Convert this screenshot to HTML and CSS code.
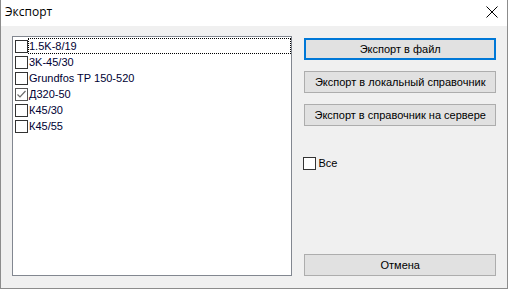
FILE: index.html
```html
<!DOCTYPE html>
<html>

<head>
    <title>Экспорт</title>

    <link rel="stylesheet" href="styles.css">
</head>

<body>
    <div class="window">
        <div class="titlebar">
            <span class="title">Экспорт</span>
            <span class="close"><svg width="12" height="12" viewBox="0 0 12 12" fill="none"
                    xmlns="http://www.w3.org/2000/svg">
                    <path d="M0.5 0.5L11.5 11.5M11.5 0.5L0.5 11.5" stroke="#000" stroke-width="1"></path>
                </svg></span>
        </div>

        <div class="content">
            <div class="list">
                <div class="item focused"><span class="box"></span><span class="label">1.5K-8/19</span></div>
                <div class="item"><span class="box"></span><span class="label">3K-45/30</span></div>
                <div class="item"><span class="box"></span><span class="label">Grundfos TP 150-520</span></div>
                <div class="item"><span class="box checked"><svg width="11" height="11" viewBox="0 0 11 11" fill="none"
                            xmlns="http://www.w3.org/2000/svg">
                            <path d="M1.5 5.5L4 8L9.5 2" stroke="#6b6b6b" stroke-width="1.2"></path>
                        </svg></span><span class="label">Д320-50</span></div>
                <div class="item"><span class="box"></span><span class="label">К45/30</span></div>
                <div class="item"><span class="box"></span><span class="label">К45/55</span></div>
            </div>

            <div class="side">
                <button class="btn primary">Экспорт в файл</button>
                <button class="btn">Экспорт в локальный справочник</button>
                <button class="btn">Экспорт в справочник на сервере</button>

                <label class="all"><span class="box"></span>Все</label>

                <button class="btn cancel">Отмена</button>
            </div>
        </div>
    </div>
</body>

</html>
```

FILE: styles.css
```css
/* Dialog window */
body {
    margin: 0;
    font-family: "Liberation Sans", Arial, sans-serif;
    font-size: 11px;
    color: #000;
}

.window {
    width: 508px;
    height: 289px;
    box-sizing: border-box;
    border: 1px solid #8c8c8c;
    border-top: none;
    display: flex;
    flex-direction: column;
    background-color: #f0f0f0;
}

.titlebar {
    height: 26px;
    background-color: #fff;
    display: flex;
    align-items: center;
    justify-content: space-between;
    padding: 0 9px 0 4px;
    flex-shrink: 0;
}

.title {
    font-family: "Open Sans", "Noto Sans", sans-serif;
    font-size: 12px;
    margin-top: -4px;
}

.close {
    display: flex;
    margin-top: -2px;
}

.content {
    flex: 1;
    display: flex;
    padding: 10px 11px 0 11px;
}

/* List with checkboxes */
.list {
    width: 281px;
    height: 240px;
    box-sizing: border-box;
    border: 1px solid #828790;
    background-color: #fff;
    padding: 1px 0 0 2px;
}

.item {
    display: flex;
    align-items: center;
    height: 16px;
    line-height: 16px;
    color: #000033;
}

.item .label {
    flex: 1;
    padding-left: 1px;
    height: 16px;
    box-sizing: border-box;
}

.item.focused .label {
    outline: 1px dotted #000;
    outline-offset: -1px;
}

.box {
    width: 13px;
    height: 13px;
    box-sizing: border-box;
    border: 1px solid #333;
    background-color: #fff;
    display: inline-flex;
    align-items: center;
    justify-content: center;
    flex-shrink: 0;
}

.box.checked {
    border-color: #555;
}

/* Right column */
.side {
    width: 192px;
    margin-left: 12px;
    display: flex;
    flex-direction: column;
    padding-top: 2px;
    padding-bottom: 12px;
}

.btn {
    height: 22px;
    box-sizing: border-box;
    border: 1px solid #adadad;
    background-color: #e1e1e1;
    font-family: "Liberation Sans", Arial, sans-serif;
    font-size: 11px;
    color: #000;
    padding: 0;
    margin-bottom: 11px;
    white-space: nowrap;
}

.btn.primary {
    border: 2px solid #0078d7;
}

.all {
    display: flex;
    align-items: center;
    gap: 2px;
    margin-top: 19px;
    margin-left: -1px;
    line-height: 14px;
}

.btn.cancel {
    margin-top: auto;
    margin-bottom: 0;
}
```
